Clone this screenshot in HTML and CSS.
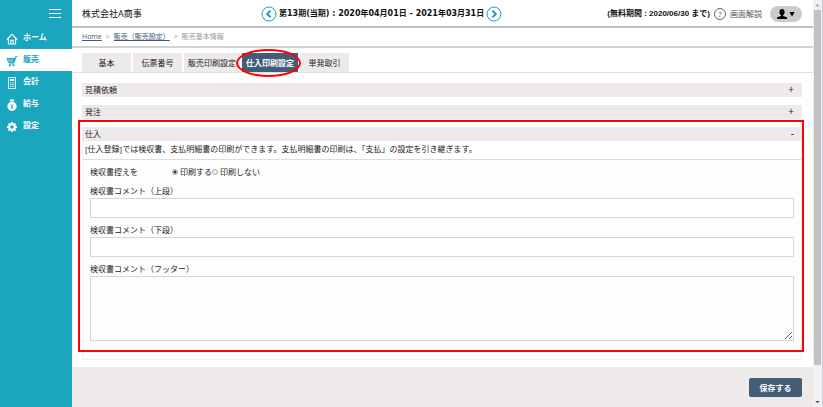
FILE: index.html
```html
<!DOCTYPE html>
<html lang="ja">
<head>
<meta charset="utf-8">
<title>販売基本情報</title>
<link rel="stylesheet" href="styles.css">
</head>
<body>
<div class="app">
  <aside class="sidebar">
    <button class="menu" type="button" aria-label="メニュー"><span></span><span></span><span></span></button>
    <nav>
      <a class="nav-item" href="#"><svg viewBox="0 0 12 12"><path d="M1 6.500 6 1.200l5 5.300M2.400 5.400V11h7.200V5.400M4.800 11V7.200h2.400V11" fill="none" stroke="currentColor" stroke-width="1.1"/></svg>ホーム</a>
      <a class="nav-item current" href="#"><svg viewBox="0 0 12 12"><path d="M1.200 3.400h8l-.8 4H2.600zM8.200 7.200 9.600 1.600h1.800M3 9h5.200" fill="none" stroke="currentColor" stroke-width="1"/><path d="M2 4.700h6.800M2.400 6.100h6.200M4 3.400v4M5.800 3.400v4M7.600 3.400v4" stroke="currentColor" stroke-width=".8"/><circle cx="3.600" cy="10.600" r="1"/><circle cx="7.600" cy="10.600" r="1"/></svg>販売</a>
      <a class="nav-item" href="#"><svg viewBox="0 0 12 12"><rect x="2.600" y=".6" width="7" height="10.800" fill="none" stroke="currentColor" stroke-width=".8"/><path d="M4 2h4.200v2H4z"/><path d="M4 5.800h4.400M4 7.600h4.400M4 9.400h4.400" stroke="currentColor" stroke-width="1" stroke-dasharray="1 .7"/></svg>会計</a>
      <a class="nav-item" href="#"><svg viewBox="0 0 12 12"><path d="M3.600.4h4.800L7.600 2.600H4.400z"/><circle cx="6" cy="7.300" r="4.600"/><path d="m4.600 5.200 1.400 2 1.400-2M6 7.200v2.600M4.800 7.400h2.400M4.800 8.600h2.400" fill="none" stroke="#1aa6be" stroke-width=".7"/></svg>給与</a>
      <a class="nav-item" href="#"><svg viewBox="0 0 12 12"><circle cx="6" cy="6" r="2.800" fill="none" stroke="currentColor" stroke-width="2"/><path d="M6 1v2M6 9v2M1 6h2M9 6h2M2.500 2.500l1.400 1.400M8.100 8.100l1.400 1.400M2.500 9.500l1.400-1.400M8.100 3.900l1.400-1.400" stroke="currentColor" stroke-width="1.800"/></svg>設定</a>
    </nav>
  </aside>
  <div class="page">
    <header class="topbar">
      <div class="company">株式会社A商事</div>
      <div class="period">
        <button class="round" type="button" aria-label="前の期"><svg viewBox="0 0 16 16"><circle cx="8" cy="8" r="7"/><path d="M9.600 4.600 6.200 8l3.400 3.400"/></svg></button>
        <span>第13期(当期) : 2020年04月01日 - 2021年03月31日</span>
        <button class="round" type="button" aria-label="次の期"><svg viewBox="0 0 16 16"><circle cx="8" cy="8" r="7"/><path d="M6.400 4.600 9.800 8l-3.400 3.400"/></svg></button>
      </div>
      <div class="tools">
        <span class="trial">(無料期間 : 2020/06/30 まで)</span>
        <a class="help" href="#"><span class="question">?</span>画面解説</a>
        <button class="user" type="button" aria-label="ユーザー"><svg viewBox="0 0 18 10"><ellipse cx="5" cy="3.200" rx="2.500" ry="3.100"/><path d="M4 5h2v2l4 1.200V10H0V8.200L4 7zM12.400 3h5.200L15 7.600z"/></svg></button>
      </div>
    </header>
    <nav class="crumbs"><a href="#">Home</a><span>&gt;</span><a href="#">販売（販売設定）</a><span>&gt;</span>販売基本情報</nav>
    <nav class="tabs">
      <a href="#">基本</a>
      <a href="#">伝票番号</a>
      <a class="wide" href="#">販売印刷設定</a>
      <a class="wide active" href="#">仕入印刷設定</a>
      <a href="#">単発取引</a>
    </nav>
    <main class="content">
      <button class="section" type="button">見積依頼<span>+</span></button>
      <button class="section" type="button">発注<span>+</span></button>
      <form class="panel">
        <button class="section" type="button">仕入<span>-</span></button>
        <p class="note">[仕入登録]では検収書、支払明細書の印刷ができます。支払明細書の印刷は、「支払」の設定を引き継ぎます。</p>
        <div class="fields">
          <div class="choice" role="radiogroup" aria-labelledby="copy">
            <span id="copy" class="choice-name">検収書控えを</span>
            <label><input type="radio" name="copy" checked>印刷する</label>
            <label><input type="radio" name="copy">印刷しない</label>
          </div>
          <label for="upper">検収書コメント（上段）</label>
          <input class="box" id="upper" type="text">
          <label for="lower">検収書コメント（下段）</label>
          <input class="box" id="lower" type="text">
          <label for="foot">検収書コメント（フッター）</label>
          <textarea class="box" id="foot"></textarea>
        </div>
        <div class="highlight"></div>
      </form>
    </main>
    <footer class="actions"><button class="save" type="button">保存する</button></footer>
  </div>
  <div class="scroll" aria-hidden="true">
    <svg viewBox="0 0 10 10"><path d="M2.500 6.500 5 4l2.500 2.500z" fill="#a3a3a3"/></svg>
    <div class="thumb"></div>
    <svg viewBox="0 0 10 10"><path d="M2.500 4 5 6.500 7.500 4z" fill="#505050"/></svg>
  </div>
</div>
</body>
</html>
```
FILE: styles.css
```css
* { box-sizing: border-box; }
body {
  margin: 0;
  font: 8px/12px "Open Sans", "Noto Sans CJK JP", sans-serif;
  color: #222;
}
button, input, textarea { font: inherit; color: inherit; }
button { border: 0; padding: 0; background: none; cursor: pointer; }
a { color: inherit; text-decoration: none; }
svg { display: block; fill: currentColor; }

.app { display: flex; min-height: 100vh; background: #fff; }
.sidebar { flex: 0 0 72px; background: #1aa6be; color: #fff; }
.menu {
  display: grid;
  gap: 3px;
  width: 12px;
  margin: 8px 11px 8px auto;
  padding: 1px 0;
}
.menu span { height: 1px; background: #fff; }
.nav-item {
  display: flex;
  align-items: center;
  gap: 5px;
  height: 22px;
  padding: 0 0 3px 6px;
  font-weight: 700;
}
.nav-item svg { width: 12px; height: 12px; margin-top: 4px; }
.nav-item.current { background: #fff; color: #1aa6be; }

.page { flex: 1; min-width: 0; display: flex; flex-direction: column; }
.topbar {
  display: grid;
  grid-template-columns: 179px 1fr auto;
  align-items: center;
  height: 28px;
  padding: 1px 11px 0 10px;
  border-bottom: 2px solid #c0c0c0;
}
.company { font-size: 9px; color: #111; }
.period {
  display: flex;
  align-items: center;
  gap: 2px;
  font-family: "DejaVu Sans", "Noto Sans CJK JP", sans-serif;
  font-weight: 700;
  color: #111;
  white-space: nowrap;
}
.round svg { width: 16px; height: 16px; fill: none; stroke: #1b9dbd; stroke-width: 1; }
.round path { stroke-width: 2; }
.tools { display: flex; align-items: center; white-space: nowrap; }
.trial {
  margin-right: 4px;
  font-family: "Liberation Sans", "Noto Sans CJK JP", sans-serif;
  font-weight: 700;
  color: #111;
}
.help { display: flex; align-items: center; gap: 4px; color: #555; }
.question {
  width: 12px;
  height: 12px;
  border: 1px solid #666;
  border-radius: 50%;
  line-height: 10px;
  text-align: center;
}
.user {
  display: grid;
  place-items: center;
  width: 32px;
  height: 16px;
  margin-left: 8px;
  border-radius: 8px;
  background: #ccc;
  color: #000;
}
.user svg { width: 18px; height: 10px; }

.crumbs {
  height: 20px;
  padding: 0 10px;
  border-bottom: 2px solid #d2d2d2;
  font-size: 7px;
  line-height: 18px;
  color: #999;
}
.crumbs a { color: #3f5b78; text-decoration: underline; }
.crumbs span { margin: 0 4px; }

.tabs {
  display: flex;
  gap: 2px;
  padding: 5px 10px 0;
  border-bottom: 1px solid #e0e0e0;
}
.tabs a {
  flex: 0 0 49px;
  background: #eeeaea;
  line-height: 19px;
  text-align: center;
  white-space: nowrap;
}
.tabs .wide { flex-basis: 56px; }
.tabs .active {
  position: relative;
  background: #435d78;
  color: #fff;
  font-weight: 700;
}
.active::after {
  content: "";
  position: absolute;
  inset: -4px -3px -5px -6px;
  border: 2px solid #f00;
  border-radius: 50%;
}

.content { display: grid; gap: 8px; padding: 10px 11px 7px 10px; }
.section {
  display: flex;
  justify-content: space-between;
  width: 100%;
  height: 14px;
  padding: 0 8px 0 3px;
  background: #eeeaea;
  line-height: 13px;
}
.section span { font-size: 10px; }
.panel { position: relative; }
.note {
  margin: 0;
  padding: 2px 2px 4px;
  border: 1px solid #f0f0f0;
  border-bottom-color: #ddd;
  border-top: 0;
}
.fields {
  display: grid;
  padding: 6px 7px 18px;
  border: 1px solid #f0f0f0;
  border-top: 0;
  background: #fdfdfd;
}
.fields > label { margin-bottom: 1px; }
.choice { display: flex; margin-bottom: 7px; }
.choice label { display: flex; align-items: center; }
.choice-name { width: 82px; }
.choice input {
  appearance: none;
  width: 6px;
  height: 6px;
  margin: 0 2px 0 0;
  border: 1px solid #aaa;
  border-radius: 50%;
  background: #eee;
}
.choice input:checked { background: radial-gradient(circle, #333 0 1px, #eee 2px); }
.box {
  width: 100%;
  height: 20px;
  margin: 0 0 6px;
  padding: 2px 4px;
  border: 1px solid #d5d5d5;
  background: #fff;
}
textarea.box { height: 65px; margin: 0; background: #fdfdfd; resize: vertical; }
.highlight {
  position: absolute;
  inset: -7px -2px 8px -4px;
  border: 2px solid #f00;
  pointer-events: none;
}

.actions {
  flex: 1;
  padding: 11px 11px 10px;
  background: #eeeaea;
  text-align: right;
}
.save {
  width: 53px;
  height: 19px;
  border-radius: 2px;
  background: #435d78;
  color: #fff;
  font-weight: 700;
}

.scroll {
  flex: 0 0 10px;
  display: flex;
  flex-direction: column;
  background: #f1f1f1;
  border-right: 1px solid #ccccd8;
}
.scroll svg { width: 9px; height: 10px; }
.thumb { flex: 1; margin: 0 1px 32px; background: #c1c1c1; }
```
